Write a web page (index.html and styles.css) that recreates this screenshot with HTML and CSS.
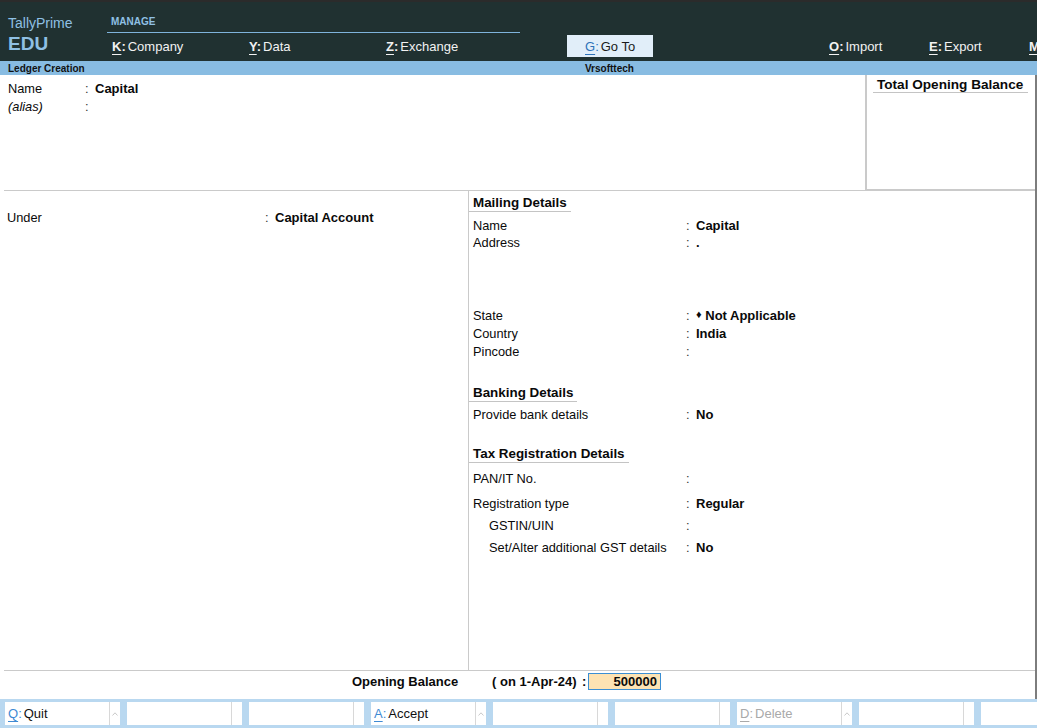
FILE: index.html
```html
<!DOCTYPE html>
<html>
<head>
<meta charset="utf-8">
<title>Ledger Creation</title>
<link rel="stylesheet" href="styles.css">
</head>
<body>
<div class="app">
  <header class="topbar">
    <div class="brand">
      <div class="brand-name">TallyPrime</div>
      <div class="brand-ed">EDU</div>
    </div>
    <nav class="menu">
      <div class="menu-label">MANAGE</div>
      <div class="menu-items">
        <div class="mgroup">
          <span class="mi"><span class="k"><u>K</u>:</span>Company</span>
          <span class="mi"><span class="k"><u>Y</u>:</span>Data</span>
          <span class="mi"><span class="k"><u>Z</u>:</span>Exchange</span>
        </div>
        <span class="mi goto"><span class="k"><u>G</u>:</span>Go To</span>
        <div class="mgroup mgroup-right">
          <span class="mi"><span class="k"><u>O</u>:</span>Import</span>
          <span class="mi"><span class="k"><u>E</u>:</span>Export</span>
          <span class="mi mi-last"><span class="k"><u>M</u></span></span>
        </div>
      </div>
    </nav>
  </header>

  <div class="titlebar">
    <span class="t-left">Ledger Creation</span>
    <span class="t-center">Vrsofttech</span>
  </div>

  <main class="form">
    <section class="top">
      <div class="namebox">
        <div class="frow name-row"><span class="lbl">Name</span><span class="col">:</span><span class="val">Capital</span></div>
        <div class="frow name-row"><span class="lbl alias">(alias)</span><span class="col">:</span><span class="val"></span></div>
      </div>
      <aside class="totpanel">
        <div class="tot-head">Total Opening Balance</div>
      </aside>
    </section>

    <section class="mid">
      <div class="mid-left">
        <div class="frow under-row"><span class="lbl">Under</span><span class="col">:</span><span class="val">Capital Account</span></div>
      </div>
      <div class="mid-right">
        <div class="shead sh-mail">Mailing Details</div>
        <div class="frow r-row r-first"><span class="lbl">Name</span><span class="col">:</span><span class="val">Capital</span></div>
        <div class="frow r-row r-address"><span class="lbl">Address</span><span class="col">:</span><span class="val">.</span></div>
        <div class="frow r-row"><span class="lbl">State</span><span class="col">:</span><span class="val"><span class="dia">&#9830;</span> Not Applicable</span></div>
        <div class="frow r-row"><span class="lbl">Country</span><span class="col">:</span><span class="val">India</span></div>
        <div class="frow r-row"><span class="lbl">Pincode</span><span class="col">:</span><span class="val"></span></div>

        <div class="shead sh-bank">Banking Details</div>
        <div class="frow r-row r-bank"><span class="lbl">Provide bank details</span><span class="col">:</span><span class="val">No</span></div>

        <div class="shead sh-tax">Tax Registration Details</div>
        <div class="frow r-row r-pan"><span class="lbl">PAN/IT No.</span><span class="col">:</span><span class="val"></span></div>
        <div class="frow r-row r-reg"><span class="lbl">Registration type</span><span class="col">:</span><span class="val">Regular</span></div>
        <div class="frow r-row r-sub"><span class="lbl">GSTIN/UIN</span><span class="col">:</span><span class="val"></span></div>
        <div class="frow r-row r-sub"><span class="lbl">Set/Alter additional GST details</span><span class="col">:</span><span class="val">No</span></div>
      </div>
    </section>

    <div class="obrow">
      <span class="ob-label">Opening Balance</span>
      <span class="ob-date">( on 1-Apr-24)</span>
      <span class="ob-col">:</span>
      <span class="ob-input">500000</span>
    </div>
  </main>

  <footer class="fbar">
    <div class="fbtn"><span class="fl"><span class="fk"><u>Q</u>:</span>Quit</span><span class="fc"><svg width="6" height="4" viewBox="0 0 6 4"><path d="M0.5 3.5 L3 0.8 L5.5 3.5" fill="none" stroke="#c4c4c4" stroke-width="0.9"/></svg></span></div>
    <div class="fbtn"><span class="fl"></span><span class="fc"></span></div>
    <div class="fbtn"><span class="fl"></span><span class="fc"></span></div>
    <div class="fbtn"><span class="fl"><span class="fk"><u>A</u>:</span>Accept</span><span class="fc"><svg width="6" height="4" viewBox="0 0 6 4"><path d="M0.5 3.5 L3 0.8 L5.5 3.5" fill="none" stroke="#c4c4c4" stroke-width="0.9"/></svg></span></div>
    <div class="fbtn"><span class="fl"></span><span class="fc"></span></div>
    <div class="fbtn"><span class="fl"></span><span class="fc"></span></div>
    <div class="fbtn dis"><span class="fl"><span class="fk"><u>D</u>:</span>Delete</span><span class="fc"><svg width="6" height="4" viewBox="0 0 6 4"><path d="M0.5 3.5 L3 0.8 L5.5 3.5" fill="none" stroke="#c4c4c4" stroke-width="0.9"/></svg></span></div>
    <div class="fbtn"><span class="fl"></span><span class="fc"></span></div>
    <div class="fbtn"><span class="fl"></span><span class="fc"></span></div>
  </footer>
</div>
</body>
</html>
```
FILE: styles.css
```css
html, body {
  margin: 0;
  padding: 0;
}
body {
  width: 1037px;
  height: 728px;
  overflow: hidden;
  font-family: "Liberation Sans", Arial, sans-serif;
  color: #0a0a0a;
  background: #fff;
}
.app {
  width: 1037px;
  height: 728px;
  display: flex;
  flex-direction: column;
}

/* ---------- top bar ---------- */
.topbar {
  height: 59px;
  border-top: 2px solid #2b2b2b;
  background: #203131;
  display: flex;
  flex: 0 0 auto;
  white-space: nowrap;
  overflow: hidden;
}
.brand {
  flex: 0 0 99px;
  padding-left: 8px;
  padding-top: 13px;
  color: #8fc0e4;
}
.brand-name {
  font-size: 14px;
  line-height: 16px;
  height: 18px;
}
.brand-ed {
  font-size: 19px;
  font-weight: bold;
  line-height: 22px;
}
.menu {
  flex: 1;
  min-width: 0;
  padding-top: 14px;
}
.menu-label {
  width: 409px;
  padding-left: 4px;
  font-size: 10px;
  font-weight: bold;
  line-height: 12px;
  padding-bottom: 4px;
  color: #8fc0e4;
  border-bottom: 1px solid #7fb4dc;
}
.menu-items {
  display: flex;
  margin-top: 2px;
  height: 22px;
}
.mgroup {
  display: flex;
  flex: 0 0 auto;
  padding-left: 5px;
}
.mi {
  display: inline-flex;
  flex: 0 0 auto;
  align-items: center;
  width: 137px;
  height: 22px;
  font-size: 13px;
  color: #f2f2f2;
}
.mi .k {
  font-weight: bold;
  margin-right: 2px;
}
.mi u {
  text-decoration: underline;
  text-underline-offset: 3px;
  text-decoration-thickness: 1px;
}
.goto {
  width: 68px;
  margin-left: 44px;
  padding-left: 18px;
  background: #e1eef9;
  color: #1a1a1a;
}
.goto .k {
  color: #2e72b8;
  font-weight: normal;
}
.mgroup-right {
  padding-left: 0;
  margin-left: 176px;
}
.mgroup-right .mi {
  width: 100px;
}
.mgroup-right .mi-last {
  width: 8px;
}

/* ---------- title bar ---------- */
.titlebar {
  height: 14px;
  background: #88bce2;
  display: flex;
  align-items: center;
  font-size: 10px;
  font-weight: bold;
  color: #111;
  flex: 0 0 auto;
}
.t-left {
  width: 577px;
  padding-left: 8px;
}

/* ---------- form ---------- */
.form {
  height: 624px;
  box-sizing: border-box;
  padding-left: 4px;
  border-right: 2px solid #7d7d7d;
  display: flex;
  flex-direction: column;
  flex: 0 0 auto;
}
.frow {
  display: flex;
  height: 18px;
  align-items: center;
  font-size: 12.8px;
  white-space: nowrap;
}
.frow .col {
  width: 10px;
  color: #333;
}
.frow .val {
  font-weight: bold;
  font-size: 13px;
}
.top {
  height: 115px;
  border-bottom: 1px solid #cacaca;
  display: flex;
}
.namebox {
  flex: 1;
  padding-top: 4px;
  padding-left: 4px;
}
.name-row .lbl {
  width: 77px;
}
.alias {
  font-style: italic;
}
.totpanel {
  width: 168px;
  border-left: 2px solid #cacaca;
  border-bottom: 1px solid #cacaca;
}
.tot-head {
  display: inline-block;
  margin-left: 6px;
  margin-top: 1px;
  padding: 0 5px 0 4px;
  font-size: 13.6px;
  font-weight: bold;
  line-height: 15px;
  border-bottom: 1px solid #c4c4c4;
}

.mid {
  height: 479px;
  border-bottom: 1px solid #cacaca;
  display: flex;
}
.mid-left {
  width: 464px;
  padding-top: 17px;
}
.under-row .lbl {
  width: 258px;
  padding-left: 3px;
}
.mid-right {
  flex: 1;
  border-left: 1px solid #cacaca;
}
.shead {
  display: inline-block;
  height: 17px;
  line-height: 17px;
  padding: 0 4px;
  font-size: 13.4px;
  font-weight: bold;
  border-bottom: 1px solid #c4c4c4;
}
.sh-mail { margin-top: 3px; }
.sh-bank { margin-top: 24px; }
.sh-tax { margin-top: 22px; }
.r-row {
  padding-left: 4px;
}
.r-row .lbl {
  width: 213px;
}
.r-first { margin-top: 4px; }
.r-address {
  height: 72px;
  align-items: flex-start;
  line-height: 18px;
}
.r-bank { margin-top: 3px; }
.r-pan { margin-top: 6px; }
.r-reg { margin-top: 7px; }
.r-sub { margin-top: 4px; }
.r-sub .lbl {
  padding-left: 16px;
  width: 197px;
}
.dia {
  font-size: 11px;
  position: relative;
  top: -2px;
}

.obrow {
  height: 28px;
  display: flex;
  align-items: flex-start;
  padding-top: 2px;
  box-sizing: border-box;
  font-size: 13px;
  font-weight: bold;
  line-height: 17px;
  white-space: nowrap;
}
.ob-label {
  margin-left: 348px;
  width: 140px;
}
.ob-date {
  width: 90px;
}
.ob-col {
  width: 6px;
}
.ob-input {
  width: 68px;
  height: 15px;
  line-height: 15px;
  padding-right: 3px;
  text-align: right;
  background: #fde3b3;
  border: 1px solid #3b8fd4;
}

/* ---------- footer buttons ---------- */
.fbar {
  height: 29px;
  box-sizing: border-box;
  padding: 3px 0 3px 5px;
  background: #b9d8f0;
  display: flex;
  gap: 7px;
  overflow: hidden;
  flex: 0 0 auto;
}
.fbtn {
  flex: 0 0 115px;
  height: 23px;
  background: #fff;
  display: flex;
}
.fl {
  width: 101px;
  padding-left: 3px;
  border-right: 1px solid #d8d8d8;
  font-size: 13px;
  line-height: 23px;
  color: #111;
  white-space: nowrap;
}
.fk {
  color: #3f8ad3;
  margin-right: 2px;
}
.fk u {
  text-underline-offset: 3px;
}
.fc {
  flex: 1;
  display: flex;
  align-items: center;
  justify-content: center;
}
.dis .fl, .dis .fk {
  color: #a9a9a9;
}
```
